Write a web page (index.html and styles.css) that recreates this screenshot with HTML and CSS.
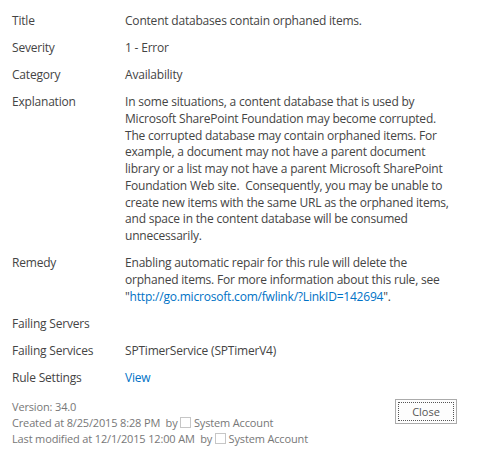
FILE: index.html
```html
<!DOCTYPE html>
<html>
<head>
<meta charset="utf-8">
<link rel="stylesheet" href="styles.css">
</head>
<body>
<div class="dialog">
  <div class="fields">
    <div class="row"><div class="label">Title</div><div class="value">Content databases contain orphaned items.</div></div>
    <div class="row"><div class="label">Severity</div><div class="value">1 - Error</div></div>
    <div class="row"><div class="label">Category</div><div class="value">Availability</div></div>
    <div class="row"><div class="label">Explanation</div><div class="value">In some situations, a content database that is used by<br>Microsoft SharePoint Foundation may become corrupted.<br>The corrupted database may contain orphaned items. For<br>example, a document may not have a parent document<br>library or a list may not have a parent Microsoft SharePoint<br>Foundation Web site.&nbsp; Consequently, you may be unable to<br>create new items with the same URL as the orphaned items,<br>and space in the content database will be consumed<br>unnecessarily.</div></div>
    <div class="row"><div class="label">Remedy</div><div class="value">Enabling automatic repair for this rule will delete the<br>orphaned items. For more information about this rule, see<br>"<a class="link" href="#">http://go.microsoft.com/fwlink/?LinkID=142694</a>".</div></div>
    <div class="row"><div class="label">Failing Servers</div><div class="value"></div></div>
    <div class="row"><div class="label">Failing Services</div><div class="value">SPTimerService (SPTimerV4)</div></div>
    <div class="row"><div class="label">Rule Settings</div><div class="value"><a class="link" href="#">View</a></div></div>
  </div>
  <div class="footer">
    <div class="info">
      <div>Version: 34.0</div>
      <div>Created at 8/25/2015 8:28 PM&nbsp; by <span class="pres"></span> System Account</div>
      <div>Last modified at 12/1/2015 12:00 AM&nbsp; by <span class="pres"></span> System Account</div>
    </div>
    <button class="close"><span class="close-inner">Close</span></button>
  </div>
</div>
</body>
</html>
```
FILE: styles.css
```css
html, body {
  margin: 0;
  padding: 0;
  background: #fff;
}
body {
  font-family: "Open Sans", "Noto Sans", sans-serif;
  font-size: 12px;
  letter-spacing: -0.2px;
  color: #444;
}
.dialog {
  width: 445px;
  padding: 13px 0 0 12px;
}
.fields {
  display: flex;
  flex-direction: column;
}
.row {
  display: grid;
  grid-template-columns: 113px 332px;
  line-height: 16.75px;
  padding-bottom: 10.25px;
  white-space: nowrap;
}
.row:last-child {
  padding-bottom: 0;
}
.label, .value {
  min-height: 16.75px;
}
.link {
  color: #0072c6;
  text-decoration: none;
}
.footer {
  display: flex;
  justify-content: space-between;
  align-items: flex-start;
  margin-top: 13px;
}
.info {
  font-size: 11px;
  letter-spacing: -0.15px;
  line-height: 16px;
  color: #777;
}
.pres {
  display: inline-block;
  width: 9px;
  height: 9px;
  border: 1px solid #c6c6c6;
  vertical-align: -1px;
}
.close {
  width: 62px;
  height: 25px;
  margin-top: 0;
  padding: 2px;
  border: 1px solid #ababab;
  background: #fdfdfd;
  font-family: inherit;
  font-size: 11px;
  letter-spacing: 0;
  color: #555;
  display: flex;
}
.close-inner {
  flex: 1;
  display: flex;
  align-items: center;
  justify-content: center;
  border: 1px dotted #555;
}
```
